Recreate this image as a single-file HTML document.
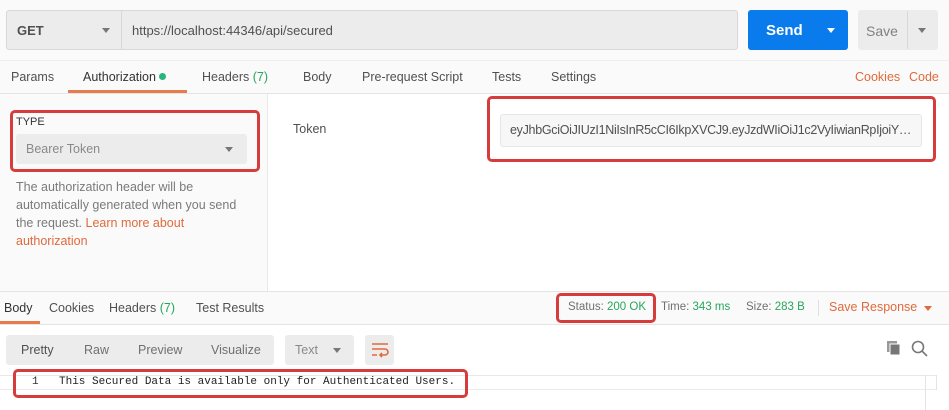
<!DOCTYPE html>
<html><head><meta charset="utf-8"><style>
*{box-sizing:border-box;margin:0;padding:0}
body{width:949px;height:410px;background:#fff;font-family:"Liberation Sans",sans-serif;font-size:12px;color:#505050;position:relative;overflow:hidden}
.a{position:absolute}
.red{position:absolute;border:3px solid #d63c3c;border-radius:5px}
.tri{position:absolute;width:0;height:0;border-left:4px solid transparent;border-right:4px solid transparent;border-top:5px solid #777}
</style></head><body>
<div class="a" style="left:0;top:0;width:949px;height:292px;background:#fafafa"></div>
<div class="a" style="left:6px;top:10px;width:732px;height:40px;background:#ececec;border:1px solid #d8d8d8;border-radius:3px"></div>
<div class="a" style="left:121px;top:11px;width:1px;height:38px;background:#d8d8d8"></div>
<div class="a" style="left:17px;top:23px;font-size:13px;font-weight:bold;color:#505050">GET</div>
<div class="tri" style="left:102px;top:28px"></div>
<div class="a" style="left:132px;top:23px;font-size:13px;color:#505050">https://localhost:44346/api/secured</div>
<div class="a" style="left:748px;top:10px;width:100px;height:40px;background:#097bed;border-radius:3px"></div>
<div class="a" style="left:766px;top:22px;font-size:15px;font-weight:bold;color:#fff">Send</div>
<div class="a" style="left:827px;top:28px;border-left:4px solid transparent;border-right:4px solid transparent;border-top:5px solid #fff"></div>
<div class="a" style="left:858px;top:10px;width:80px;height:40px;background:#ececec;border-radius:3px"></div>
<div class="a" style="left:907px;top:11px;width:1px;height:38px;background:#d8d8d8"></div>
<div class="a" style="left:866px;top:23px;font-size:14px;color:#808080">Save</div>
<div class="tri" style="left:918px;top:28px"></div>
<div class="a" style="left:0;top:60px;width:949px;height:1px;background:#eee"></div>
<div class="a" style="left:0;top:93px;width:949px;height:1px;background:#e4e4e4"></div>
<div class="a" style="left:11px;top:70px;font-size:12.5px">Params</div>
<div class="a" style="left:83px;top:70px;font-size:12.5px;color:#333">Authorization <span style="display:inline-block;width:7px;height:7px;border-radius:50%;background:#26b47f;vertical-align:1px"></span></div>
<div class="a" style="left:68px;top:90px;width:119px;height:3px;background:#e87b4c"></div>
<div class="a" style="left:202px;top:70px;font-size:12.5px">Headers <span style="color:#26a65b">(7)</span></div>
<div class="a" style="left:303px;top:70px;font-size:12.5px">Body</div>
<div class="a" style="left:362px;top:70px;font-size:12.5px">Pre-request Script</div>
<div class="a" style="left:492px;top:70px;font-size:12.5px">Tests</div>
<div class="a" style="left:551px;top:70px;font-size:12.5px">Settings</div>
<div class="a" style="left:855px;top:70px;font-size:12.5px;color:#e06a3c">Cookies</div>
<div class="a" style="left:909px;top:70px;font-size:12.5px;color:#e06a3c">Code</div>
<div class="a" style="left:267px;top:94px;width:1px;height:197px;background:#e8e8e8"></div>
<div class="a" style="left:268px;top:94px;width:681px;height:197px;background:#fff"></div>
<div class="a" style="left:16px;top:116px;font-size:11px;color:#333">TYPE</div>
<div class="a" style="left:16px;top:134px;width:231px;height:30px;background:#ececec;border-radius:3px"></div>
<div class="a" style="left:26px;top:142px;font-size:12.5px;color:#8a8a8a">Bearer Token</div>
<div class="tri" style="left:225px;top:147px"></div>
<div class="red" style="left:10px;top:110px;width:250px;height:62px"></div>
<div class="a" style="left:16px;top:178px;width:232px;font-size:12.5px;line-height:18px;color:#7a7a7a">The authorization header will be automatically generated when you send the request. <span style="color:#e06a3c">Learn more about authorization</span></div>
<div class="a" style="left:293px;top:122px;font-size:12.5px;color:#505050">Token</div>
<div class="a" style="left:500px;top:114px;width:422px;height:33px;background:#f7f7f7;border:1px solid #e6e6e6;border-radius:3px"></div>
<div class="a" style="left:510px;top:123px;font-size:12.5px;color:#505050;white-space:nowrap;width:405px;overflow:hidden;text-overflow:ellipsis;letter-spacing:-0.3px">eyJhbGciOiJIUzI1NiIsInR5cCI6IkpXVCJ9.eyJzdWIiOiJ1c2VyIiwianRpIjoiYzUxxxxxxxxxx</div>
<div class="red" style="left:487px;top:96px;width:449px;height:66px"></div>
<div class="a" style="left:0;top:291px;width:949px;height:1px;background:#e4e4e4"></div>
<div class="a" style="left:0;top:292px;width:949px;height:32px;background:#fafafa"></div>
<div class="a" style="left:0;top:324px;width:949px;height:1px;background:#e4e4e4"></div>
<div class="a" style="left:4px;top:301px;font-size:12.5px;color:#333">Body</div>
<div class="a" style="left:0;top:321px;width:40px;height:3px;background:#e87b4c"></div>
<div class="a" style="left:49px;top:301px;font-size:12.5px">Cookies</div>
<div class="a" style="left:109px;top:301px;font-size:12.5px">Headers <span style="color:#26a65b">(7)</span></div>
<div class="a" style="left:196px;top:301px;font-size:12.5px">Test Results</div>
<div class="a" style="left:568px;top:301px;font-size:11.5px;color:#707070">Status: <span style="color:#26a65b">200 OK</span></div>
<div class="red" style="left:556px;top:293px;width:100px;height:30px"></div>
<div class="a" style="left:661px;top:301px;font-size:11.5px;color:#707070">Time: <span style="color:#26a65b">343 ms</span></div>
<div class="a" style="left:746px;top:301px;font-size:11.5px;color:#707070">Size: <span style="color:#26a65b">283 B</span></div>
<div class="a" style="left:818px;top:300px;width:1px;height:16px;background:#e0e0e0"></div>
<div class="a" style="left:829px;top:300px;font-size:12.5px;color:#e06a3c">Save Response</div>
<div class="a" style="left:924px;top:306px;border-left:4px solid transparent;border-right:4px solid transparent;border-top:5px solid #e06a3c"></div>
<div class="a" style="left:6px;top:335px;width:268px;height:30px;background:#ececec;border-radius:3px"></div>
<div class="a" style="left:21px;top:343px;font-size:12.5px">Pretty</div>
<div class="a" style="left:84px;top:343px;font-size:12.5px;color:#707070">Raw</div>
<div class="a" style="left:138px;top:343px;font-size:12.5px;color:#707070">Preview</div>
<div class="a" style="left:211px;top:343px;font-size:12.5px;color:#707070">Visualize</div>
<div class="a" style="left:285px;top:335px;width:69px;height:30px;background:#ececec;border-radius:3px"></div>
<div class="a" style="left:295px;top:343px;font-size:12.5px;color:#8a8a8a">Text</div>
<div class="tri" style="left:333px;top:348px"></div>
<div class="a" style="left:365px;top:335px;width:29px;height:30px;background:#ececec;border-radius:3px"></div>
<svg class="a" style="left:371px;top:342px" width="18" height="16" viewBox="0 0 18 16" fill="none" stroke="#e06a3c" stroke-width="1.6"><path d="M1 2h16M1 7h13a3 3 0 0 1 0 6h-5M11 11l-2 2 2 2M1 13h5"/></svg>
<svg class="a" style="left:886px;top:340px" width="16" height="16" viewBox="0 0 16 16"><rect x="1" y="1" width="10" height="11" fill="#999"/><rect x="4" y="4" width="10" height="11" fill="#777" stroke="#fff" stroke-width="1"/></svg>
<svg class="a" style="left:911px;top:340px" width="17" height="17" viewBox="0 0 17 17" fill="none" stroke="#777" stroke-width="1.6"><circle cx="7" cy="7" r="5.5"/><path d="M11 11l5 5"/></svg>
<div class="a" style="left:0;top:375px;width:937px;height:1px;background:#e8e8e8"></div>
<div class="a" style="left:0;top:389px;width:937px;height:1px;background:#ececec"></div>
<div class="a" style="left:925px;top:375px;width:1px;height:35px;background:#e4e4e4"></div>
<div class="a" style="left:936px;top:375px;width:1px;height:15px;background:#e4e4e4"></div>
<div class="a" style="left:32px;top:376px;font-family:'Liberation Mono',monospace;font-size:11px;color:#333">1</div>
<div class="a" style="left:59px;top:376px;font-family:'Liberation Mono',monospace;font-size:11px;color:#222;white-space:nowrap">This Secured Data is available only for Authenticated Users.</div>
<div class="red" style="left:13px;top:369px;width:455px;height:29px"></div>
</body></html>
